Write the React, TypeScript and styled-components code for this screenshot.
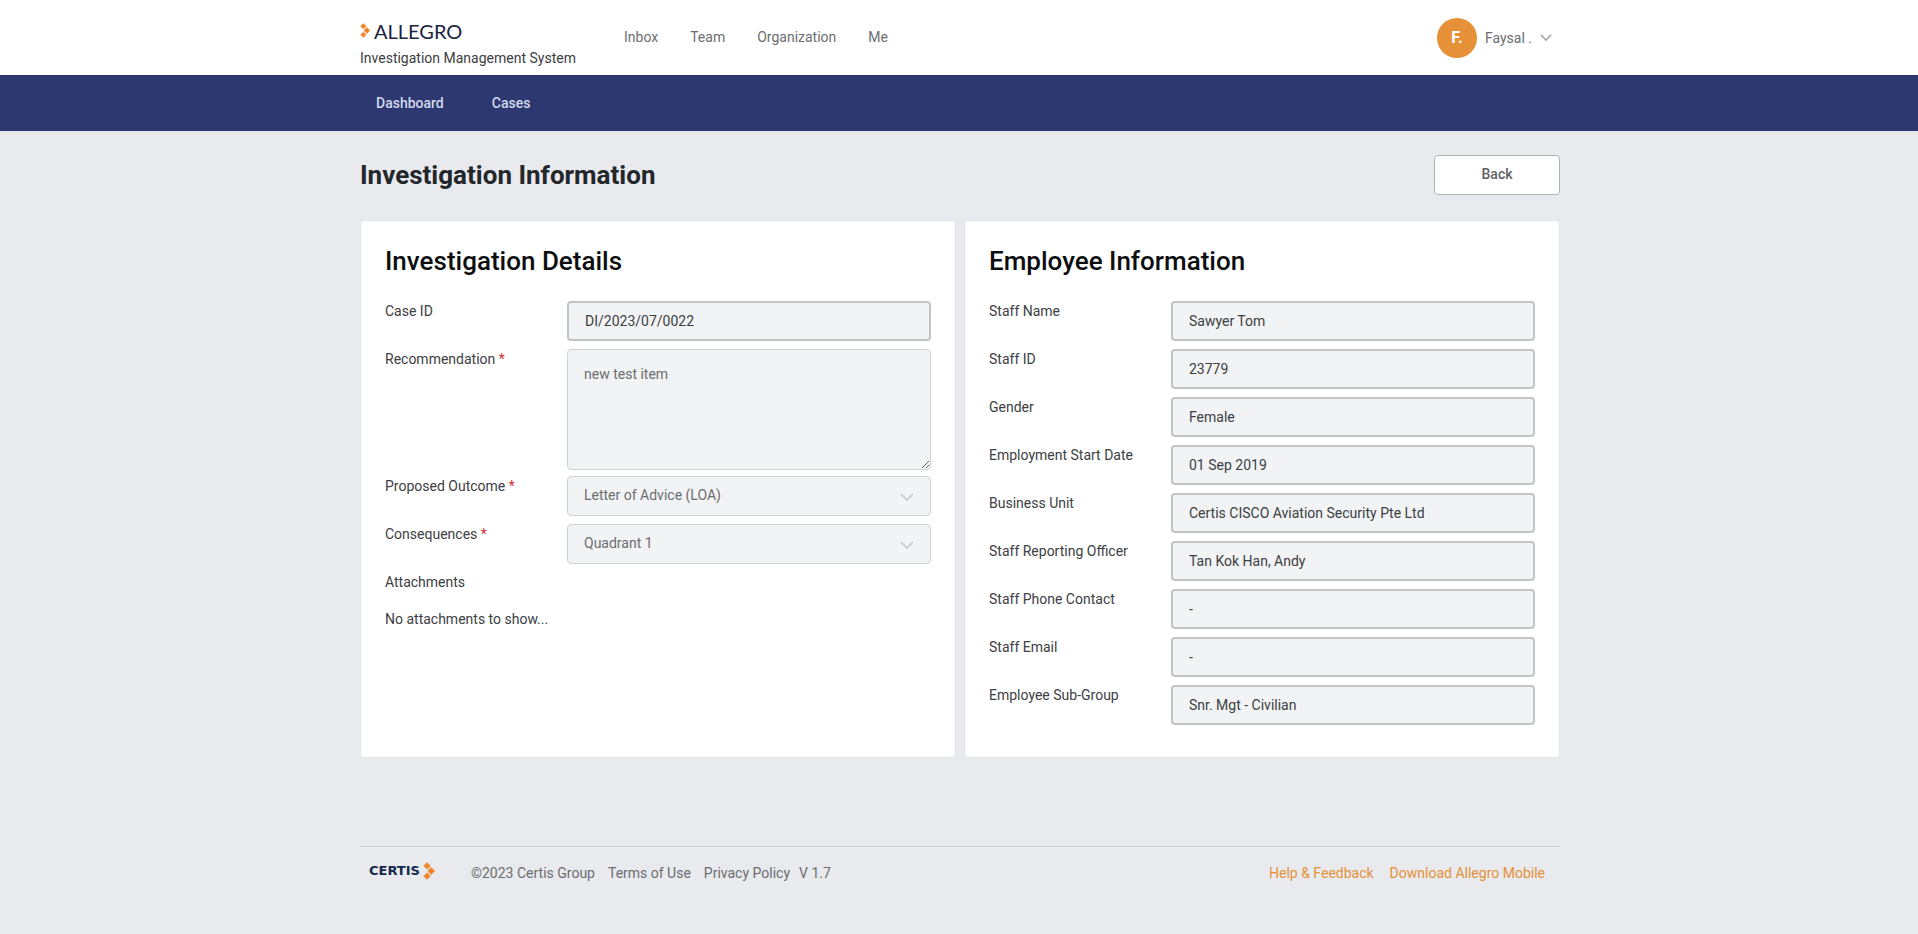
import React from "react";
import styled, { createGlobalStyle } from "styled-components";

const GlobalStyle = createGlobalStyle`
  *, *::before, *::after { box-sizing: border-box; }
  body {
    margin: 0;
    background: #e8eaed;
    color: #3c4043;
    font-family: Roboto, "Liberation Sans", sans-serif;
    font-size: 14px;
    line-height: 20px;
  }
  input, select, textarea, button { font: inherit; color: inherit; }
  a { color: inherit; text-decoration: none; }
`;

const Container = styled.div`
  max-width: 1202px;
  margin: 0 auto;
  padding-left: 2px;
`;

const Header = styled.header`
  background: #fff;
`;

const HeaderRow = styled(Container)`
  display: flex;
  align-items: center;
  height: 75px;
`;

const Brand = styled.a`
  display: flex;
  flex-direction: column;
  width: 264px;
  padding-top: 12px;
`;

const BrandLogo = styled.span`
  display: flex;
  align-items: center;
  gap: 4px;
  height: 28px;
  color: #1c2340;
  font-family: Lato, sans-serif;
  font-size: 20px;
  line-height: 28px;
`;

const BrandCaption = styled.span`
  line-height: 26px;
`;

const MainNav = styled.nav`
  display: flex;
  flex: 1;
  gap: 32px;
  padding-bottom: 2px;
  color: #6b6d70;
`;

const UserMenu = styled.button`
  display: flex;
  align-items: center;
  gap: 8px;
  padding: 0 8px 0 0;
  border: 0;
  background: none;
  color: #6b6d70;
`;

const Avatar = styled.span`
  width: 40px;
  height: 40px;
  border-radius: 50%;
  background: #e69138;
  color: #fff;
  font-size: 16px;
  font-weight: 700;
  line-height: 40px;
  text-align: center;
`;

const SubNav = styled.nav`
  background: #2c386f;
`;

const SubNavRow = styled(Container)`
  display: flex;
  align-items: center;
  height: 56px;
`;

const SubNavLink = styled.a`
  padding: 0 32px 0 16px;
  color: #d3d8ee;
  font-weight: 500;
`;

const TitleBar = styled.div`
  display: flex;
  align-items: center;
  justify-content: space-between;
  padding: 24px 0 25px;
`;

const PageTitle = styled.h1`
  margin: 0;
  color: #23272b;
  font-size: 26px;
  font-weight: 700;
  line-height: 40px;
`;

const BackButton = styled.button`
  width: 126px;
  height: 40px;
  padding: 0 0 2px;
  border: 1px solid #b0b2b5;
  border-radius: 4px;
  background: #fff;
  color: #5f6164;
  font-weight: 500;
`;

const Cards = styled.div`
  display: grid;
  grid-template-columns: 1fr 1fr;
  gap: 8px;
`;

const Card = styled.section`
  padding: 24px 24px 32px;
  border: 1px solid #e3e5e8;
  border-radius: 4px;
  background: #fff;
`;

const CardTitle = styled.h2`
  margin: 0 0 24px;
  color: #0c0e10;
  font-size: 26px;
  font-weight: 500;
  line-height: 32px;
`;

const Fields = styled.div`
  display: grid;
  gap: 8px;
`;

const FieldRow = styled.div`
  display: grid;
  grid-template-columns: 1fr 2fr;
`;

const FieldLabel = styled.label`
  line-height: 20px;
`;

const Required = styled.span`
  color: #d32f2f;
`;

const ReadOnlyInput = styled.input`
  width: 100%;
  height: 40px;
  padding: 0 16px;
  border: 2px solid #c2c4c7;
  border-radius: 4px;
  outline: 0;
  background: #f1f3f4;
`;

const TextArea = styled.textarea`
  display: block;
  width: 100%;
  height: 121px;
  margin-bottom: -2px;
  padding: 14px 16px;
  border: 1px solid #cfd3d7;
  border-radius: 4px;
  background: #f1f3f4;
  color: #6b6d70;
  resize: vertical;
`;

const SelectBox = styled.div`
  position: relative;

  svg {
    position: absolute;
    top: 17px;
    right: 17px;
    pointer-events: none;
  }
`;

const Select = styled.select`
  width: 100%;
  height: 40px;
  padding: 0 40px 2px 16px;
  border: 1px solid #cfd3d7;
  border-radius: 4px;
  appearance: none;
  background: #f1f3f4;
  color: #6b6d70;
  opacity: 1;
`;

const AttachmentsTitle = styled.h3`
  margin: 0;
  font-size: 14px;
  font-weight: 400;
`;

const EmptyNote = styled.p`
  margin: 17px 0 0;
`;

const Footer = styled.footer`
  display: flex;
  align-items: center;
  margin-top: 88px;
  padding: 14px 15px 24px 9px;
  border-top: 1px solid #cbced2;
  color: #6b6d70;
`;

const CertisLogo = styled.a`
  display: flex;
  align-items: center;
  gap: 3px;
  width: 102px;
  padding-bottom: 4px;
  color: #14284b;
  font-family: "DejaVu Sans", sans-serif;
  font-size: 13px;
  font-weight: 700;
`;

const FooterLinks = styled.div<{ $accent?: boolean }>`
  display: flex;
  gap: ${(p) => (p.$accent ? 16 : 13)}px;
  margin-left: ${(p) => (p.$accent ? "auto" : 0)};
  color: ${(p) => (p.$accent ? "#e69138" : "inherit")};
  line-height: 20px;
`;

const Version = styled.span`
  margin-left: -4px;
`;

const BrandMark = ({ width, height }: { width: number; height: number }) => (
  <svg width={width} height={height} viewBox="0 0 12 18" aria-hidden="true">
    <path d="M4 .2 7.800 4 4.200 7.600 .3 4Z" fill="#ee8a32" />
    <path d="M8.200 5.200 12 9 8.200 12.800 4.500 9Z" fill="#f58220" />
    <path d="M4.200 10.400 7.800 14 4 17.800 .3 14Z" fill="#ee8a32" />
  </svg>
);

const Chevron = ({ width, height, color, stroke }: { width: number; height: number; color: string; stroke: number }) => (
  <svg width={width} height={height} viewBox="0 0 14 8" fill="none" stroke={color} strokeWidth={stroke} aria-hidden="true">
    <path d="M1 1 7 7 13 1" />
  </svg>
);

const employee = [
  ["Staff Name", "Sawyer Tom"],
  ["Staff ID", "23779"],
  ["Gender", "Female"],
  ["Employment Start Date", "01 Sep 2019"],
  ["Business Unit", "Certis CISCO Aviation Security Pte Ltd"],
  ["Staff Reporting Officer", "Tan Kok Han, Andy"],
  ["Staff Phone Contact", "-"],
  ["Staff Email", "-"],
  ["Employee Sub-Group", "Snr. Mgt - Civilian"],
];

const toId = (label: string) => label.toLowerCase().replace(/\s+/g, "-");

const InputField = ({ label, value }: { label: string; value: string }) => (
  <FieldRow>
    <FieldLabel htmlFor={toId(label)}>{label}</FieldLabel>
    <ReadOnlyInput id={toId(label)} value={value} readOnly />
  </FieldRow>
);

const SelectField = ({ label, value }: { label: string; value: string }) => (
  <FieldRow>
    <FieldLabel htmlFor={toId(label)}>
      {label} <Required>*</Required>
    </FieldLabel>
    <SelectBox>
      <Select id={toId(label)} disabled defaultValue={value}>
        <option>{value}</option>
      </Select>
      <Chevron width={14} height={8} color="#c2c4c7" stroke={1.5} />
    </SelectBox>
  </FieldRow>
);

export default function App() {
  return (
    <>
      <GlobalStyle />
      <Header>
        <HeaderRow>
          <Brand href="#">
            <BrandLogo>
              <BrandMark width={10} height={15} />
              ALLEGRO
            </BrandLogo>
            <BrandCaption>Investigation Management System</BrandCaption>
          </Brand>
          <MainNav>
            <a href="#">Inbox</a>
            <a href="#">Team</a>
            <a href="#">Organization</a>
            <a href="#">Me</a>
          </MainNav>
          <UserMenu type="button">
            <Avatar>F.</Avatar>
            Faysal .
            <Chevron width={12} height={7} color="#a9abae" stroke={2} />
          </UserMenu>
        </HeaderRow>
      </Header>
      <SubNav>
        <SubNavRow>
          <SubNavLink href="#">Dashboard</SubNavLink>
          <SubNavLink href="#">Cases</SubNavLink>
        </SubNavRow>
      </SubNav>
      <Container>
        <main>
          <TitleBar>
            <PageTitle>Investigation Information</PageTitle>
            <BackButton type="button">Back</BackButton>
          </TitleBar>
          <Cards>
            <Card>
              <CardTitle>Investigation Details</CardTitle>
              <Fields>
                <InputField label="Case ID" value="DI/2023/07/0022" />
                <FieldRow>
                  <FieldLabel htmlFor="recommendation">
                    Recommendation <Required>*</Required>
                  </FieldLabel>
                  <TextArea id="recommendation" disabled defaultValue="new test item" />
                </FieldRow>
                <SelectField label="Proposed Outcome" value="Letter of Advice (LOA)" />
                <SelectField label="Consequences" value="Quadrant 1" />
                <div>
                  <AttachmentsTitle>Attachments</AttachmentsTitle>
                  <EmptyNote>No attachments to show...</EmptyNote>
                </div>
              </Fields>
            </Card>
            <Card>
              <CardTitle>Employee Information</CardTitle>
              <Fields>
                {employee.map(([label, value]) => (
                  <InputField key={label} label={label} value={value} />
                ))}
              </Fields>
            </Card>
          </Cards>
        </main>
        <Footer>
          <CertisLogo href="#">
            CERTIS
            <BrandMark width={12} height={18} />
          </CertisLogo>
          <FooterLinks>
            <span>©2023 Certis Group</span>
            <a href="#">Terms of Use</a>
            <a href="#">Privacy Policy</a>
            <Version>V 1.7</Version>
          </FooterLinks>
          <FooterLinks $accent>
            <a href="#">Help &amp; Feedback</a>
            <a href="#">Download Allegro Mobile</a>
          </FooterLinks>
        </Footer>
      </Container>
    </>
  );
}
